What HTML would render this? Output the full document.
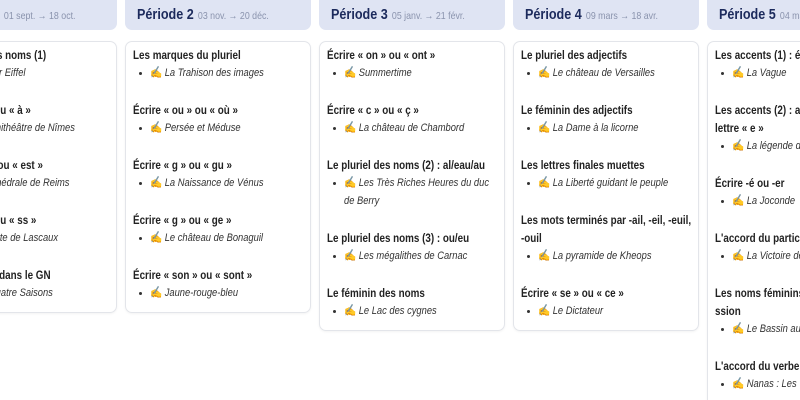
<!DOCTYPE html>
<html><head><meta charset="utf-8"><style>
html,body{margin:0;width:800px;height:400px;overflow:hidden}
body{background:#fff;font-family:"Liberation Sans",sans-serif;position:relative}
.col{position:absolute;top:0;width:186px}
.hd{position:absolute;top:-10px;left:0;width:186px;height:40px;background:#dfe4f3;border-radius:7px;box-sizing:border-box;padding:10px 0 0 12px;line-height:30px;white-space:nowrap;overflow:hidden}
.hd div{transform:scaleX(.84);transform-origin:left}
.hd b{font-size:15px;color:#1c2a5c;font-weight:bold}
.hd span{font-size:10.5px;color:#8a93ad;margin-left:5px}
.card{position:absolute;top:41px;left:0;width:186px;box-sizing:border-box;border:1px solid #e3e5ea;border-radius:7px;padding:4px 6px 10px 7px;box-shadow:0 1px 2px rgba(0,0,0,.05)}
.t{font-size:12px;font-weight:bold;color:#222;line-height:18px;width:122%;transform:scaleX(.82);transform-origin:left}
.i{font-size:11px;font-style:italic;color:#333;line-height:18px;padding-left:17px;position:relative;margin-bottom:19px}
.i span{display:block;width:118%;transform:scaleX(.85);transform-origin:left}
.i:before{content:"";position:absolute;left:6px;top:8px;width:3px;height:3px;border-radius:50%;background:#333}
.i em{font-style:normal;color:#e8a820;font-size:11.5px;line-height:0;margin-right:3px}
</style></head><body>
<div class="col" style="left:-69px"><div class="hd"><div><b>Période 1</b><span>01 sept. → 18 oct.</span></div></div>
<div class="card">
<div class="t">Le pluriel des noms (1)</div><div class="i"><span><em>✍</em>La Tour Eiffel</span></div>
<div class="t">Écrire « a » ou « à »</div><div class="i"><span><em>✍</em>L'amphithéâtre de Nîmes</span></div>
<div class="t">Écrire « et » ou « est »</div><div class="i"><span><em>✍</em>La cathédrale de Reims</span></div>
<div class="t">Écrire « s » ou « ss »</div><div class="i"><span><em>✍</em>La grotte de Lascaux</span></div>
<div class="t">Les accords dans le GN</div><div class="i" style="margin-bottom:0"><span><em>✍</em>Les Quatre Saisons</span></div>
</div></div>
<div class="col" style="left:125px"><div class="hd"><div><b>Période 2</b><span>03 nov. → 20 déc.</span></div></div>
<div class="card">
<div class="t">Les marques du pluriel</div><div class="i"><span><em>✍</em>La Trahison des images</span></div>
<div class="t">Écrire « ou » ou « où »</div><div class="i"><span><em>✍</em>Persée et Méduse</span></div>
<div class="t">Écrire « g » ou « gu »</div><div class="i"><span><em>✍</em>La Naissance de Vénus</span></div>
<div class="t">Écrire « g » ou « ge »</div><div class="i"><span><em>✍</em>Le château de Bonaguil</span></div>
<div class="t">Écrire « son » ou « sont »</div><div class="i" style="margin-bottom:0"><span><em>✍</em>Jaune-rouge-bleu</span></div>
</div></div>
<div class="col" style="left:319px"><div class="hd"><div><b>Période 3</b><span>05 janv. → 21 févr.</span></div></div>
<div class="card">
<div class="t">Écrire « on » ou « ont »</div><div class="i"><span><em>✍</em>Summertime</span></div>
<div class="t">Écrire « c » ou « ç »</div><div class="i"><span><em>✍</em>La château de Chambord</span></div>
<div class="t">Le pluriel des noms (2) : al/eau/au</div><div class="i"><span><em>✍</em>Les Très Riches Heures du duc<br>de Berry</span></div>
<div class="t">Le pluriel des noms (3) : ou/eu</div><div class="i"><span><em>✍</em>Les mégalithes de Carnac</span></div>
<div class="t">Le féminin des noms</div><div class="i" style="margin-bottom:0"><span><em>✍</em>Le Lac des cygnes</span></div>
</div></div>
<div class="col" style="left:513px"><div class="hd"><div><b>Période 4</b><span>09 mars → 18 avr.</span></div></div>
<div class="card">
<div class="t">Le pluriel des adjectifs</div><div class="i"><span><em>✍</em>Le château de Versailles</span></div>
<div class="t">Le féminin des adjectifs</div><div class="i"><span><em>✍</em>La Dame à la licorne</span></div>
<div class="t">Les lettres finales muettes</div><div class="i"><span><em>✍</em>La Liberté guidant le peuple</span></div>
<div class="t">Les mots terminés par -ail, -eil, -euil,<br>-ouil</div><div class="i"><span><em>✍</em>La pyramide de Kheops</span></div>
<div class="t">Écrire « se » ou « ce »</div><div class="i" style="margin-bottom:0"><span><em>✍</em>Le Dictateur</span></div>
</div></div>
<div class="col" style="left:707px"><div class="hd"><div><b>Période 5</b><span>04 mai → 04 juil.</span></div></div>
<div class="card">
<div class="t">Les accents (1) : é / è</div><div class="i"><span><em>✍</em>La Vague</span></div>
<div class="t">Les accents (2) : accent sur la<br>lettre « e »</div><div class="i"><span><em>✍</em>La légende de la Dame</span></div>
<div class="t">Écrire -é ou -er</div><div class="i"><span><em>✍</em>La Joconde</span></div>
<div class="t">L'accord du participe passé</div><div class="i"><span><em>✍</em>La Victoire de Samothrace</span></div>
<div class="t">Les noms féminins en -tion / -<br>ssion</div><div class="i"><span><em>✍</em>Le Bassin aux nymphéas</span></div>
<div class="t">L'accord du verbe avec le sujet</div><div class="i"><span><em>✍</em>Nanas : Les Trois Grâces</span></div>
</div></div>
</body></html>
